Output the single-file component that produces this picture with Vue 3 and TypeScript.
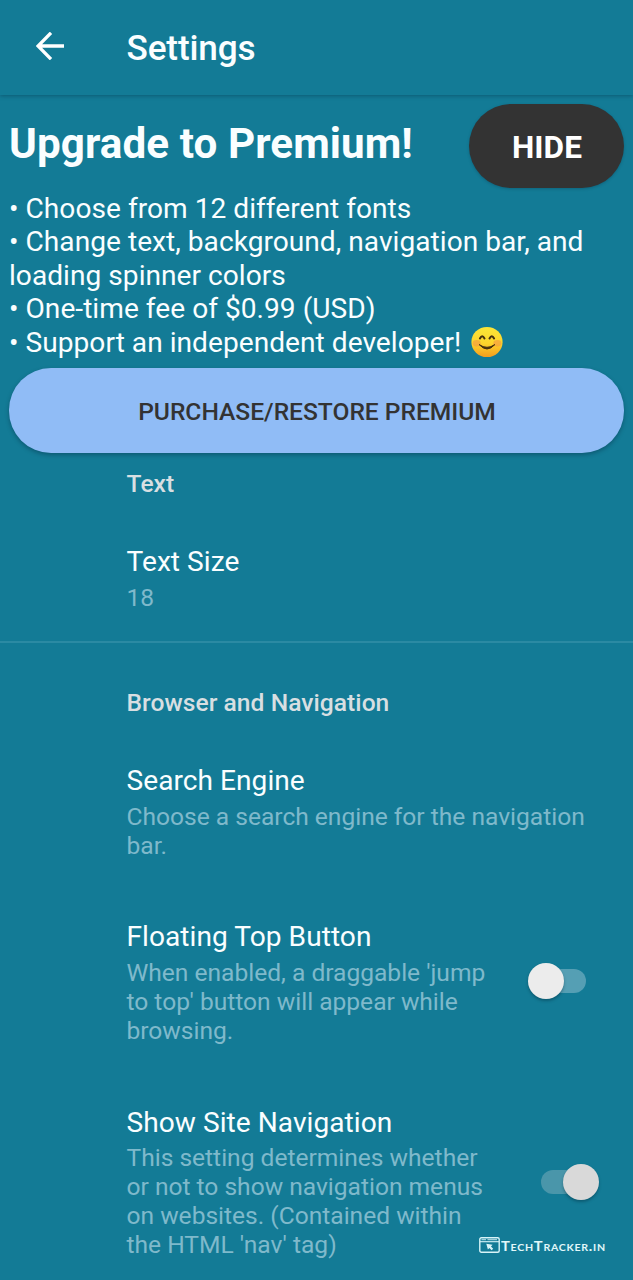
<script setup lang="ts">
interface Pref {
  title: string
  lines: string[]
  checked?: boolean
}

const perks: string[] = [
  '• Choose from 12 different fonts',
  '• Change text, background, navigation bar, and',
  'loading spinner colors',
  '• One-time fee of $0.99 (USD)',
]

const browserPrefs: Pref[] = [
  { title: 'Search Engine', lines: ['Choose a search engine for the navigation', 'bar.'] },
  {
    title: 'Floating Top Button',
    lines: ["When enabled, a draggable 'jump", "to top' button will appear while", 'browsing.'],
    checked: false,
  },
  {
    title: 'Show Site Navigation',
    lines: [
      'This setting determines whether',
      'or not to show navigation menus',
      'on websites. (Contained within',
      "the HTML 'nav' tag)",
    ],
    checked: true,
  },
]
</script>

<template>
  <div class="screen">
    <header class="toolbar">
      <svg class="back" viewBox="0 0 28 28" width="28" height="28">
        <path d="M28 14H2M15 .8L2 14L15 27.2" fill="none" stroke="#fff" stroke-width="3.3" />
      </svg>
      <h1>Settings</h1>
    </header>

    <section class="premium">
      <div class="premium-head">
        <h2>Upgrade to Premium!</h2>
        <button class="hide">HIDE</button>
      </div>
      <div class="perks">
        <div v-for="p in perks" :key="p">{{ p }}</div>
        <div class="last">
          <span>• Support an independent developer!</span>
          <svg class="smile" viewBox="0 0 32 32" width="32" height="32">
            <defs>
              <linearGradient id="face" x1="0" y1="0" x2="0" y2="1">
                <stop offset="0" stop-color="#fbe638" />
                <stop offset=".55" stop-color="#fdd42c" />
                <stop offset="1" stop-color="#f49c1c" />
              </linearGradient>
            </defs>
            <ellipse cx="16" cy="16" rx="15.6" ry="15.1" fill="url(#face)" />
            <ellipse cx="5.6" cy="17.2" rx="4" ry="3.3" fill="#f28a48" opacity=".5" />
            <ellipse cx="26.4" cy="17.2" rx="4" ry="3.3" fill="#f28a48" opacity=".5" />
            <path d="M8.9 12.4Q11.2 8.2 13.5 12.4M18.5 12.4Q20.8 8.2 23.1 12.4" fill="none" stroke="#45300f" stroke-width="2" stroke-linecap="round" />
            <path d="M8.2 18.6Q16 27.4 23.8 18.6Q16 24 8.2 18.6Z" fill="#45300f" stroke="#45300f" stroke-width="1" stroke-linejoin="round" />
          </svg>
        </div>
      </div>
      <button class="purchase">PURCHASE/RESTORE PREMIUM</button>
    </section>

    <section class="group first">
      <h3>Text</h3>
      <div class="pref">
        <div class="title">Text Size</div>
        <div class="summary">18</div>
      </div>
    </section>

    <section class="group">
      <h3>Browser and Navigation</h3>
      <div v-for="pref in browserPrefs" :key="pref.title" class="pref">
        <div class="copy">
          <div class="title">{{ pref.title }}</div>
          <div v-for="l in pref.lines" :key="l" class="summary">{{ l }}</div>
        </div>
        <div v-if="pref.checked !== undefined" class="switch" :class="{ on: pref.checked }">
          <span class="thumb"></span>
        </div>
      </div>
    </section>

    <div class="watermark">
      <svg viewBox="0 0 21 16" width="21" height="16" fill="none" stroke="#d8f4f8">
        <rect x=".8" y=".8" width="19.4" height="14.4" rx="1.5" stroke-width="1.4" />
        <path d="M1 4.7H20" stroke-width="1.1" />
        <path d="M2.5 2.6H7M8.5 2.6H18" stroke-width="1.2" opacity=".7" />
        <path d="M7.3 6.8L13.6 7.8L12 9.4L14.2 11.8L12.6 13.2L10.4 10.9L8.9 12.5Z" fill="#d8f4f8" stroke="none" />
      </svg>
      <span>TechTracker.in</span>
    </div>
  </div>
</template>

<style>
body {
  margin: 0;
  background: #137b96;
}
</style>

<style scoped>
.screen {
  position: relative;
  width: 633px;
  height: 1280px;
  overflow: hidden;
  background: #137b96;
  color: #fafeff;
  font-family: Roboto, sans-serif;
}
h1, h2, h3 { margin: 0; white-space: nowrap; }
.toolbar {
  box-sizing: border-box;
  height: 95px;
  padding-left: 35.5px;
  display: flex;
  align-items: center;
  box-shadow: 0 1px 4px rgba(0, 40, 60, 0.38);
}
.back { margin-top: -3px; }
h1 {
  margin-left: 63px;
  padding-top: 2px;
  font-size: 35.2px;
  font-weight: 500;
  line-height: 41px;
  letter-spacing: -0.15px;
}
.premium { padding: 9px 9px 0; }
.premium-head {
  display: flex;
  justify-content: space-between;
  height: 84px;
}
h2 {
  font-size: 42.2px;
  font-weight: 700;
  line-height: 50px;
  padding-top: 15px;
  letter-spacing: 0.08px;
}
button {
  border: 0;
  padding: 2px 0 0;
  height: 84px;
  border-radius: 42px;
  font-family: inherit;
  white-space: nowrap;
}
.hide {
  width: 155px;
  padding-left: 1px;
  background: #333;
  color: #fff;
  font-size: 31.6px;
  font-weight: 700;
  box-shadow: 0 1px 3px rgba(0, 30, 50, 0.25);
}
.purchase {
  display: block;
  width: 615px;
  height: 85px;
  padding-left: 1px;
  background: #90bcf6;
  color: #333;
  font-size: 24.6px;
  font-weight: 500;
  letter-spacing: -0.02px;
  box-shadow: 0 2px 4px rgba(0, 30, 50, 0.35);
}
.perks {
  height: 176.5px;
  padding-top: 3.5px;
  font-size: 28.1px;
  line-height: 33.5px;
  letter-spacing: 0.03px;
  white-space: nowrap;
}
.last { display: flex; }
.smile { margin: 0 0 0 10px; }
.group { padding-left: 126.5px; }
.group.first {
  height: 188px;
  border-bottom: 2px solid #2b8aa3;
}
h3 {
  padding-top: 45px;
  font-size: 24.6px;
  line-height: 29px;
  font-weight: 500;
  letter-spacing: 0.04px;
  color: #d8dfe2;
}
.first h3 { padding-top: 16px; }
.pref {
  position: relative;
  padding-top: 47px;
}
.pref + .pref { padding-top: 60.7px; }
.title {
  font-size: 28.1px;
  line-height: 33px;
  padding-bottom: 4.7px;
  letter-spacing: 0.04px;
}
.summary {
  font-size: 24.6px;
  line-height: 29px;
  color: #7fb9cb;
  letter-spacing: -0.02px;
  white-space: nowrap;
}
.switch {
  position: absolute;
  left: 401.5px;
  top: 103.3px;
  width: 58px;
  height: 36px;
}
.switch::before {
  content: '';
  position: absolute;
  left: 14px;
  top: 6px;
  width: 44px;
  height: 24px;
  border-radius: 12px;
  background: #559fb4;
}
.thumb {
  position: absolute;
  left: 0;
  top: 0;
  width: 36px;
  height: 36px;
  border-radius: 50%;
  background: #ececec;
  box-shadow: 0 2px 3px rgba(0, 35, 50, 0.35);
}
.switch.on { left: 414.5px; top: 118.5px; }
.switch.on::before { left: 0; background: #4a96aa; }
.switch.on .thumb { left: 22px; background: #d9d9d9; }
.watermark {
  position: absolute;
  left: 479px;
  top: 1237px;
  display: flex;
  color: #e2f8fa;
  font-family: Lato, sans-serif;
  font-size: 12.5px;
  font-weight: 700;
  font-variant: small-caps;
  letter-spacing: 0.6px;
  line-height: 19px;
  white-space: nowrap;
}
.watermark span {
  margin-left: 1px;
  transform: scaleX(1.18);
  transform-origin: left;
}
</style>
